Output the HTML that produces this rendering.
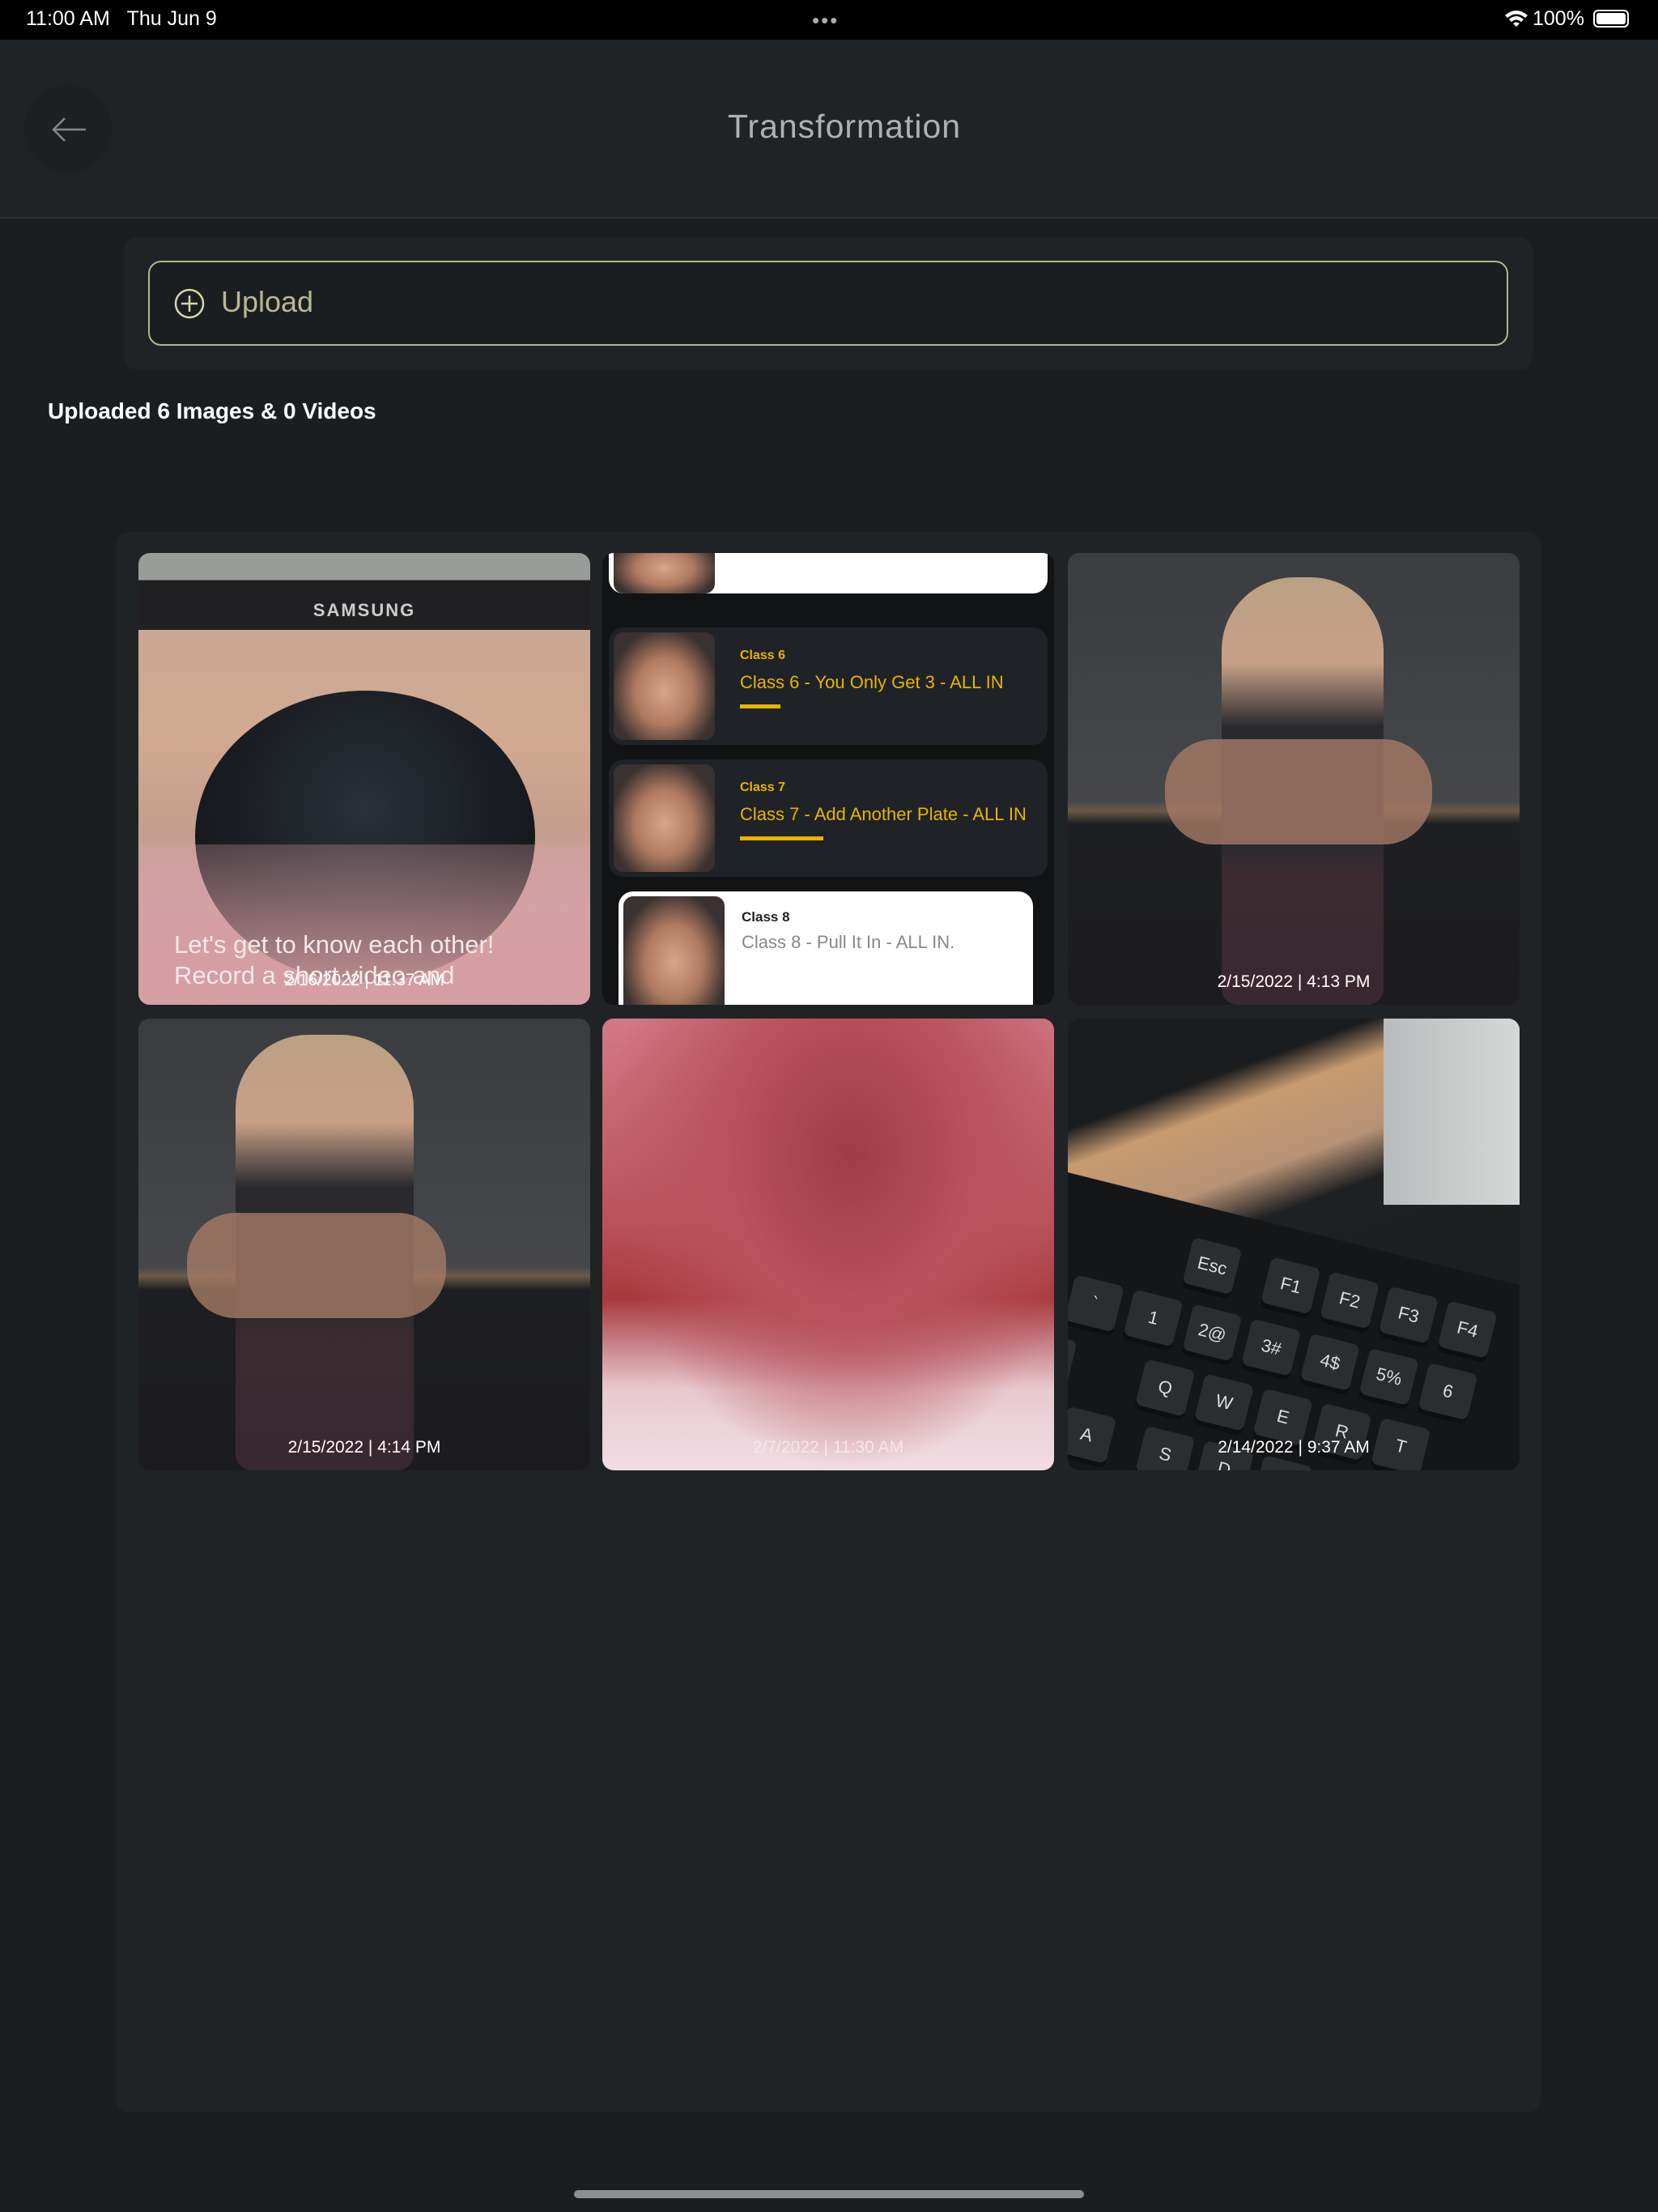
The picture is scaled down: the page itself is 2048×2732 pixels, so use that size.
<!DOCTYPE html>
<html><head><meta charset="utf-8"><style>
*{margin:0;padding:0;box-sizing:border-box}
body{width:2048px;height:2732px;background:#1b1e21;position:relative;overflow:hidden;font-family:"Liberation Sans",sans-serif;color:#fff}
.abs{position:absolute}
.tile{position:absolute;width:558px;height:558px;border-radius:14px;overflow:hidden}
.date{position:absolute;left:0;right:0;bottom:16px;text-align:center;font-size:21px;color:#fff}
.cls{position:absolute;left:8px;right:8px;background:#1f2226;border-radius:18px;overflow:hidden}
.face{position:absolute;left:6px;top:6px;bottom:6px;width:125px;border-radius:12px;background:radial-gradient(ellipse at 50% 55%,#d9a58a 0,#b07a60 40%,#3a3230 75%)}
.key{position:absolute;width:62px;height:58px;background:#2b2d30;border-radius:8px;box-shadow:0 6px 0 #0e0f10;color:#ddd;font-size:22px;text-align:center;line-height:58px}
</style></head><body>
<div class="abs" style="left:0;top:0;width:2048px;height:49px;background:#000"></div>
<div class="abs" style="left:32px;top:9px;font-size:25px">11:00 AM&nbsp;&nbsp;&nbsp;Thu Jun 9</div>
<div class="abs" style="left:1003px;top:20px;font-size:26px;letter-spacing:2px;color:#aaa;line-height:10px">•••</div>
<svg class="abs" style="left:1857px;top:11px" width="32" height="24" viewBox="0 0 32 24"><path d="M2 8Q16 -4 30 8L27 11Q16 2 5 11Z M7 13Q16 5 25 13L22 16Q16 11 10 16Z M12 18Q16 15 20 18L16 22Z" fill="#fff"/></svg>
<div class="abs" style="left:1893px;top:9px;font-size:25px">100%</div>
<div class="abs" style="left:1968px;top:12px;width:44px;height:22px;border:2px solid #fff;border-radius:6px;padding:2px"><div style="width:100%;height:100%;background:#fff;border-radius:3px"></div></div>
<div class="abs" style="left:0;top:49px;width:2048px;height:221px;background:#202326;border-bottom:2px solid #2a2d31"></div>
<div class="abs" style="left:29px;top:104px;width:110px;height:110px;border-radius:50%;background:#1d2023"></div>
<svg class="abs" style="left:62px;top:142px" width="46" height="36" viewBox="0 0 46 36"><path d="M44 18H4M18 4L4 18L18 32" fill="none" stroke="#888" stroke-width="2.5"/></svg>
<div class="abs" style="left:0;width:2086px;top:133px;text-align:center;font-size:41px;color:#b0b0b0;letter-spacing:1px;font-weight:300">Transformation</div>
<div class="abs" style="left:153px;top:293px;width:1740px;height:164px;background:#202326;border-radius:16px"></div>
<div class="abs" style="left:183px;top:322px;width:1680px;height:105px;border:2px solid #b5b38f;border-radius:16px;background:#1b1e21"></div>
<svg class="abs" style="left:214px;top:355px" width="40" height="40" viewBox="0 0 40 40"><circle cx="20" cy="20" r="17" fill="none" stroke="#d8d6a8" stroke-width="2.5"/><path d="M20 10V30M10 20H30" stroke="#d8d6a8" stroke-width="2.5"/></svg>
<div class="abs" style="left:273px;top:352px;font-size:36px;color:#b9b794">Upload</div>
<div class="abs" style="left:59px;top:492px;font-size:28px;font-weight:bold">Uploaded 6 Images &amp; 0 Videos</div>
<div class="abs" style="left:143px;top:657px;width:1760px;height:1952px;background:#202326;border-radius:16px"></div>

<div class="tile" style="left:171px;top:683px;background:linear-gradient(180deg,#9a9c9a 0,#9a9c9a 6%,#202022 6%,#202022 17%,#c9a795 17%,#d2aa91 40%,#c59e8e 60%,#d0a2a4 80%,#c58d90 100%)">
 <div class="abs" style="left:0;top:58px;width:100%;text-align:center;font-size:22px;font-weight:bold;color:#ccc;letter-spacing:2px">SAMSUNG</div>
 <div class="abs" style="left:70px;top:170px;width:420px;height:360px;border-radius:50%;background:radial-gradient(ellipse at 50% 40%,#2a3038,#0d0f12)"></div>
 <div class="abs" style="left:0;top:360px;width:100%;height:200px;background:linear-gradient(180deg,rgba(215,160,165,0.3),rgba(215,160,165,0.95))"></div>
 <div class="abs" style="left:44px;top:465px;font-size:31px;color:#f4e8ea;line-height:38px">Let's get to know each other!<br>Record a short video and</div>
 <div class="date" style="bottom:18px">2/16/2022 | 11:37 AM</div>
</div>

<div class="tile" style="left:744px;top:683px;background:#111315">
 <div class="cls" style="top:-20px;height:70px;background:#fff"><div class="face" style="top:0;bottom:0"></div></div>
 <div class="cls" style="top:92px;height:145px"><div class="face"></div><div class="abs" style="left:162px;top:26px;font-size:16px;color:#e8b400;font-weight:bold">Class 6</div><div class="abs" style="left:162px;top:55px;font-size:22px;color:#e8b400">Class 6 - You Only Get 3 - ALL IN</div><div class="abs" style="left:162px;top:95px;width:50px;height:5px;background:#e8b400"></div></div>
 <div class="cls" style="top:255px;height:145px"><div class="face"></div><div class="abs" style="left:162px;top:26px;font-size:16px;color:#e8b400;font-weight:bold">Class 7</div><div class="abs" style="left:162px;top:55px;font-size:22px;color:#e8b400">Class 7 - Add Another Plate - ALL IN</div><div class="abs" style="left:162px;top:95px;width:103px;height:5px;background:#e8b400"></div></div>
 <div class="cls" style="top:418px;height:160px;background:#fff;left:20px;right:26px"><div class="face"></div><div class="abs" style="left:152px;top:22px;font-size:17px;color:#222;font-weight:bold">Class 8</div><div class="abs" style="left:152px;top:50px;font-size:22px;color:#888">Class 8 - Pull It In - ALL IN.</div></div>
</div>

<div class="tile" style="left:1319px;top:683px;background:linear-gradient(180deg,#3a3c40 0,#46474a 55%,#6a5a48 57%,#1e1f22 60%,#1c1c1f 100%)">
 <div class="abs" style="left:190px;top:30px;width:200px;height:528px;border-radius:90px 90px 20px 20px;background:linear-gradient(180deg,#b9a183 0,#c9a087 20%,#2a2a2e 35%,#2a2a2e 62%,#3b2a30 70%,#3a2830 100%)"></div>
 <div class="abs" style="left:120px;top:230px;width:330px;height:130px;border-radius:60px;background:#a57a66;opacity:.8"></div>
 <div class="date">2/15/2022 | 4:13 PM</div>
</div>

<div class="tile" style="left:171px;top:1258px;background:linear-gradient(180deg,#3a3c40 0,#46474a 55%,#6a5a48 57%,#1e1f22 60%,#1c1c1f 100%)">
 <div class="abs" style="left:120px;top:20px;width:220px;height:538px;border-radius:90px 90px 20px 20px;background:linear-gradient(180deg,#b9a183 0,#c9a087 20%,#2a2a2e 35%,#2a2a2e 62%,#3b2a30 70%,#3a2830 100%)"></div>
 <div class="abs" style="left:60px;top:240px;width:320px;height:130px;border-radius:60px;background:#a57a66;opacity:.8"></div>
 <div class="date">2/15/2022 | 4:14 PM</div>
</div>

<div class="tile" style="left:744px;top:1258px;background:radial-gradient(ellipse at 55% 30%,#9e3c48 0,#b8525c 35%,transparent 70%),linear-gradient(180deg,#d27a85 0,#b8525b 45%,#a8393e 62%,#e8c9d0 82%,#f0dde3 100%)">
 <div class="date" style="color:#f6e6ea">2/7/2022 | 11:30 AM</div>
</div>

<div class="tile" style="left:1319px;top:1258px;background:linear-gradient(160deg,#1a1c1e 0,#1a1c1e 18%,#c79b70 24%,#b89275 36%,#1e2022 44%,#1a1b1d 100%)">
 <div class="abs" style="left:390px;top:0;width:168px;height:230px;background:linear-gradient(90deg,#b9bcbc,#d6d8d8)"></div>
 <div class="abs" style="left:0;top:190px;width:700px;height:500px;transform:rotate(14deg);transform-origin:0 0;background:#151617">
  <div class="key" style="left:170px;top:40px">Esc</div>
  <div class="key" style="left:270px;top:40px">F1</div><div class="key" style="left:345px;top:40px">F2</div><div class="key" style="left:420px;top:40px">F3</div><div class="key" style="left:495px;top:40px">F4</div>
  <div class="key" style="left:40px;top:120px">`</div><div class="key" style="left:115px;top:120px">1</div><div class="key" style="left:190px;top:120px">2@</div><div class="key" style="left:265px;top:120px">3#</div><div class="key" style="left:340px;top:120px">4$</div><div class="key" style="left:415px;top:120px">5%</div><div class="key" style="left:490px;top:120px">6</div>
  <div class="key" style="left:0;top:200px">Tab</div><div class="key" style="left:150px;top:200px">Q</div><div class="key" style="left:225px;top:200px">W</div><div class="key" style="left:300px;top:200px">E</div><div class="key" style="left:375px;top:200px">R</div><div class="key" style="left:450px;top:200px">T</div>
  <div class="key" style="left:70px;top:280px">A</div><div class="key" style="left:170px;top:280px">S</div><div class="key" style="left:245px;top:280px">D</div><div class="key" style="left:320px;top:280px">F</div>
 </div>
 <div class="date">2/14/2022 | 9:37 AM</div>
</div>

<div class="abs" style="left:709px;top:2705px;width:630px;height:10px;border-radius:5px;background:#8c8e91"></div>
</body></html>
